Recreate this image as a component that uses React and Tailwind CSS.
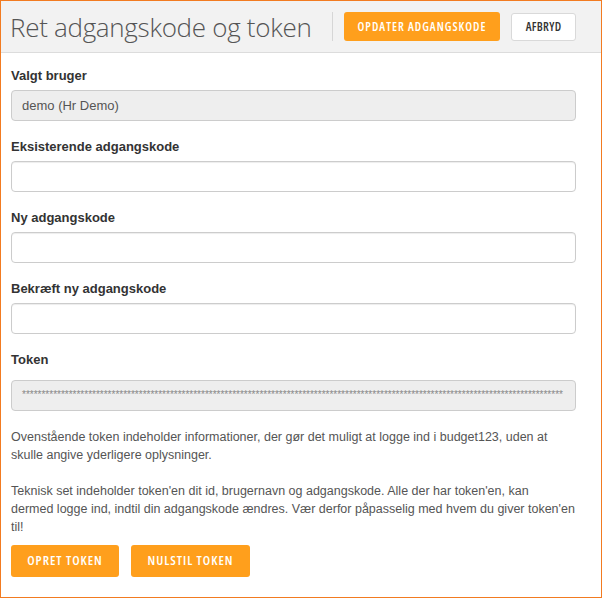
import React from 'react';

const fields = [
  { label: 'Eksisterende adgangskode' },
  { label: 'Ny adgangskode' },
  { label: 'Bekræft ny adgangskode' },
];

const stars = '*'.repeat(139);

export default function App() {
  return (
    <div className="w-[602px] h-[598px] border border-[#f27b21] bg-white font-['Liberation_Sans',Arial,sans-serif] text-[13px] text-[#555] flex flex-col">
      {/* Header */}
      <div className="h-[52px] shrink-0 bg-[#f2f2f2] border-b border-[#dcdcdc] flex items-center pl-[9px] pr-[25px]">
        <h1 className="font-['Open_Sans',sans-serif] font-light text-[26px] text-[#555] leading-none tracking-[-0.3px]">
          Ret adgangskode og token
        </h1>
        <div className="ml-auto flex items-center h-[29px]">
          <div className="w-px h-full bg-[#d6d6d6] mr-[11px]"></div>
          <button className="h-[29px] w-[156px] bg-[#ff9f1c] rounded-[3px] text-white font-['Open_Sans',sans-serif] font-semibold text-[12px] [font-stretch:75%] tracking-[1px] uppercase">
            Opdater adgangskode
          </button>
          <button className="ml-[11px] h-[28px] w-[65px] bg-white border border-[#d9d9d9] rounded-[3px] text-[#333] font-['Open_Sans',sans-serif] font-semibold text-[12px] [font-stretch:75%] tracking-[0.3px] uppercase">
            Afbryd
          </button>
        </div>
      </div>

      {/* Body */}
      <div className="pl-[10px] pr-[25px] pt-[14px]">
        <label className="block font-bold text-[#333] leading-[18px] mb-[5px]">Valgt bruger</label>
        <div className="h-[31px] bg-[#eeeeee] border border-[#cccccc] rounded-[4px] flex items-center px-[10px] text-[#555]">
          demo (Hr Demo)
        </div>

        {fields.map((f) => (
          <div key={f.label} className="mt-[17px]">
            <label className="block font-bold text-[#333] leading-[18px] mb-[5px]">{f.label}</label>
            <div className="h-[31px] bg-white border border-[#cccccc] rounded-[4px] shadow-[inset_0_1px_1px_rgba(0,0,0,0.075)]"></div>
          </div>
        ))}

        <div className="mt-[17px]">
          <label className="block font-bold text-[#333] leading-[18px] mb-[11px]">Token</label>
          <div className="h-[31px] bg-[#eeeeee] border border-[#cccccc] rounded-[4px] flex items-center pl-[10px] pr-[9px] pb-[2px] overflow-hidden">
            <span className="text-[10px] text-[#888] whitespace-nowrap">{stars}</span>
          </div>
        </div>

        <p className="mt-[17px] leading-[18px] text-[12.5px]">
          Ovenstående token indeholder informationer, der gør det muligt at logge ind i budget123, uden at skulle angive yderligere oplysninger.
        </p>
        <p className="mt-[18px] leading-[18px] text-[12.5px]">
          Teknisk set indeholder token'en dit id, brugernavn og adgangskode. Alle der har token'en, kan
          <br />
          dermed logge ind, indtil din adgangskode ændres. Vær derfor påpasselig med hvem du giver token'en til!
        </p>

        <div className="mt-[9px] flex gap-[12px]">
          <button className="h-[32px] w-[108px] bg-[#ff9f1c] rounded-[3px] text-white font-['Open_Sans',sans-serif] font-semibold text-[13px] [font-stretch:75%] tracking-[1px] uppercase">
            Opret token
          </button>
          <button className="h-[32px] w-[119px] bg-[#ff9f1c] rounded-[3px] text-white font-['Open_Sans',sans-serif] font-semibold text-[13px] [font-stretch:75%] tracking-[1px] uppercase">
            Nulstil token
          </button>
        </div>
      </div>
    </div>
  );
}
